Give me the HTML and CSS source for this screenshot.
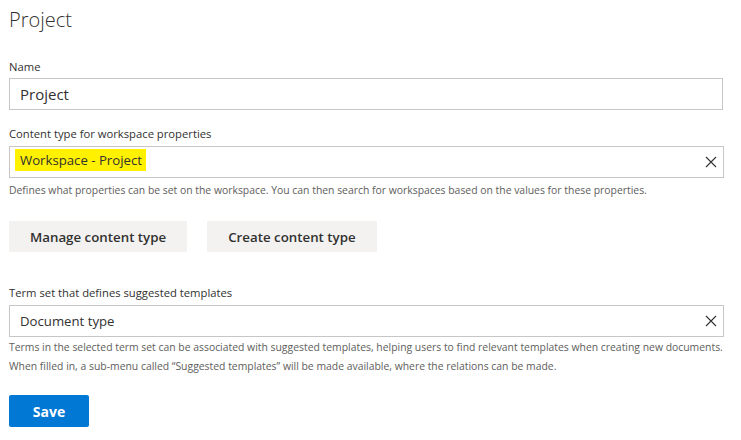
FILE: index.html
```html
<!DOCTYPE html>
<html>
<head>
<meta charset="utf-8">
<link rel="stylesheet" href="styles.css">
</head>
<body>
<div class="page">
  <h1 class="title">Project</h1>

  <div class="field field-name">
    <label class="label">Name</label>
    <div class="input input-name"><span class="value value-lg">Project</span></div>
  </div>

  <div class="field field-ct">
    <label class="label">Content type for workspace properties</label>
    <div class="input input-wide"><span class="value highlight">Workspace - Project</span>
      <svg class="clear" width="12" height="12" viewBox="0 0 12 12"><path d="M1 1 L11 11 M11 1 L1 11" stroke="#323130" stroke-width="1.1" fill="none"/></svg>
    </div>
    <p class="help">Defines what properties can be set on the workspace. You can then search for workspaces based on the values for these properties.</p>
  </div>

  <div class="buttons">
    <button class="btn">Manage content type</button>
    <button class="btn">Create content type</button>
  </div>

  <div class="field field-term">
    <label class="label">Term set that defines suggested templates</label>
    <div class="input input-wide"><span class="value">Document type</span>
      <svg class="clear" width="12" height="12" viewBox="0 0 12 12"><path d="M1 1 L11 11 M11 1 L1 11" stroke="#323130" stroke-width="1.1" fill="none"/></svg>
    </div>
    <p class="help help-multi">Terms in the selected term set can be associated with suggested templates, helping users to find relevant templates when creating new documents.<br>When filled in, a sub-menu called “Suggested templates” will be made available, where the relations can be made.</p>
  </div>

  <button class="save">Save</button>
</div>
</body>
</html>
```

FILE: styles.css
```css
* { box-sizing: border-box; }
html, body { margin: 0; padding: 0; background: #ffffff; }
body { font-family: "Open Sans", "Noto Sans", sans-serif; color: #323130; }
.page { padding: 6px 0 0 9px; width: 741px; }
.title { margin: 0; font-size: 20px; font-weight: 300; line-height: 28px; color: #323130; }
.field { display: flex; flex-direction: column; }
.field-name { margin-top: 25px; }
.label { font-size: 11.25px; line-height: 16px; color: #323130; }
.input { margin-top: 4px; height: 32px; border: 1px solid #c8c6c4; display: flex; align-items: center; padding: 0 10px; width: 715px; }
.input-name { margin-top: 3px; width: 714px; }
.input-wide { justify-content: space-between; padding-right: 6px; }
.value { font-size: 13.2px; color: #323130; line-height: 18px; }
.value-lg { font-size: 15px; line-height: 20px; }
.highlight { background: #fff100; margin-left: -5px; padding: 2px 4px 2px 5px; margin-bottom: 5px; }
.clear { flex: none; }
.field-ct { margin-top: 16px; }
.help { margin: 3px 0 0; font-size: 10.4px; line-height: 19px; color: #605e5c; white-space: nowrap; }
.buttons { display: flex; gap: 20px; margin-top: 21px; }
.btn { font-family: inherit; font-size: 13.3px; font-weight: 600; color: #323130; background: #f3f2f1; border: none; height: 31px; padding: 0 21px; border-radius: 1px; }
.field-term { margin-top: 33px; }
.help-multi { margin-top: 1px; }
.save { margin-top: 19px; width: 80px; height: 32px; background: #0078d4; color: #ffffff; border: none; border-radius: 2px; font-family: inherit; font-size: 14px; font-weight: 700; }
```
